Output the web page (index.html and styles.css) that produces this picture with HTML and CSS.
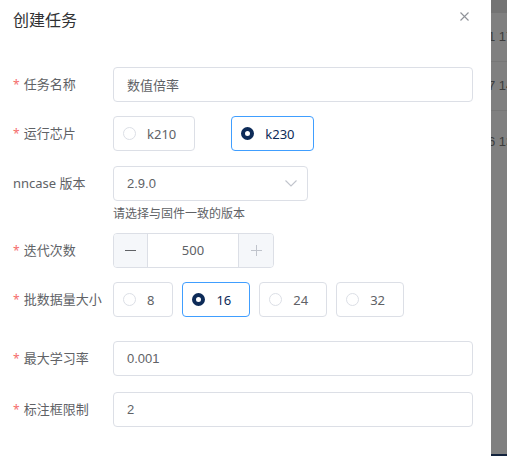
FILE: index.html
```html
<!DOCTYPE html>
<html lang="zh-CN">
<head>
<meta charset="utf-8">
<title>创建任务</title>
<link rel="stylesheet" href="styles.css">
</head>
<body>
<div class="page">
  <div class="dialog">
    <div class="dialog-header">
      <span class="title">创建任务</span>
      <span class="close">
        <svg width="9" height="9" viewBox="0 0 9 9"><path d="M0.5 0.5L8.5 8.5M8.5 0.5L0.5 8.5" stroke="#909399" stroke-width="1.1" fill="none"/></svg>
      </span>
    </div>
    <div class="form">
      <div class="item gap-14">
        <div class="label"><span class="req">*</span>任务名称</div>
        <div class="control"><div class="input">数值倍率</div></div>
      </div>
      <div class="item gap-15">
        <div class="label"><span class="req">*</span>运行芯片</div>
        <div class="control radios radios-wide">
          <div class="radio-box"><span class="dot"></span><span class="rtext">k210</span></div>
          <div class="radio-box checked"><span class="dot"></span><span class="rtext">k230</span></div>
        </div>
      </div>
      <div class="item-wrap gap-10">
        <div class="item">
          <div class="label">nncase 版本</div>
          <div class="control">
            <div class="select">
              <span class="input-value">2.9.0</span>
              <svg class="chev" width="12" height="7" viewBox="0 0 12 7"><path d="M0.5 0.5L6 6L11.5 0.5" stroke="#c0c4cc" stroke-width="1.1" fill="none"/></svg>
            </div>
          </div>
        </div>
        <div class="help">请选择与固件一致的版本</div>
      </div>
      <div class="item gap-14">
        <div class="label"><span class="req">*</span>迭代次数</div>
        <div class="control">
          <div class="number">
            <span class="num-btn minus"><svg width="11" height="11" viewBox="0 0 11 11"><path d="M0 5.5H11" stroke="#606266" stroke-width="1"/></svg></span>
            <span class="num-val">500</span>
            <span class="num-btn plus"><svg width="11" height="11" viewBox="0 0 11 11"><path d="M0 5.5H11M5.5 0V11" stroke="#c0c4cc" stroke-width="1"/></svg></span>
          </div>
        </div>
      </div>
      <div class="item gap-24">
        <div class="label"><span class="req">*</span>批数据量大小</div>
        <div class="control radios radios-tight">
          <div class="radio-box"><span class="dot"></span><span class="rtext">8</span></div>
          <div class="radio-box checked"><span class="dot"></span><span class="rtext">16</span></div>
          <div class="radio-box"><span class="dot"></span><span class="rtext">24</span></div>
          <div class="radio-box"><span class="dot"></span><span class="rtext">32</span></div>
        </div>
      </div>
      <div class="item gap-16">
        <div class="label"><span class="req">*</span>最大学习率</div>
        <div class="control"><div class="input"><span class="input-value">0.001</span></div></div>
      </div>
      <div class="item">
        <div class="label"><span class="req">*</span>标注框限制</div>
        <div class="control"><div class="input"><span class="input-value">2</span></div></div>
      </div>
    </div>
  </div>
  <div class="backdrop">
    <div class="bd-head"></div>
    <div class="bd-row r1">1 17</div>
    <div class="bd-row r2">7 14</div>
    <div class="bd-row r3">6 13</div>
    <div class="bd-fill"></div>
    <div class="bd-bottom"></div>
  </div>
</div>
</body>
</html>
```

FILE: styles.css
```css
* { box-sizing: border-box; }
html, body { margin: 0; padding: 0; }
body {
  font-family: "Noto Sans", "Noto Sans CJK SC", sans-serif;
  font-size: 13px;
  color: #606266;
  background: #fff;
}
.page {
  display: flex;
  width: 507px;
  height: 456px;
  overflow: hidden;
}
.dialog {
  width: 491px;
  flex: none;
  background: #fff;
}
.dialog-header {
  display: flex;
  justify-content: space-between;
  height: 38px;
  padding: 0 22px 0 13px;
}
.title {
  font-family: "Noto Sans CJK SC", sans-serif;
  font-size: 16px;
  line-height: 38px;
  color: #303133;
}
.close {
  margin-top: 12px;
  width: 9px;
  height: 9px;
  display: flex;
}
.form {
  padding: 29px 18px 0 0;
}
.item {
  display: flex;
  align-items: center;
}
.gap-10 { margin-bottom: 10px; }
.gap-14 { margin-bottom: 14px; }
.gap-15 { margin-bottom: 15px; }
.gap-16 { margin-bottom: 16px; }
.gap-24 { margin-bottom: 24px; }
.label {
  width: 113px;
  flex: none;
  padding-left: 13px;
  font-family: "Noto Sans", "Noto Sans CJK SC", sans-serif;
  font-size: 13px;
  line-height: 35px;
  color: #606266;
  white-space: nowrap;
}
.req {
  color: #f56c6c;
  font-size: 12px;
  margin-right: 4px;
}
.control {
  flex: 1;
  min-width: 0;
}
.input, .select {
  height: 35px;
  border: 1px solid #dcdfe6;
  border-radius: 4px;
  padding-left: 13px;
  display: flex;
  align-items: center;
  font-family: "Noto Sans CJK SC", sans-serif;
  font-size: 13px;
  color: #606266;
}
.input-value {
  font-family: "Liberation Sans", Arial, sans-serif;
  font-size: 13px;
  color: #606266;
}
.select {
  width: 195px;
  justify-content: space-between;
  padding-right: 10px;
}
.chev { display: block; }
.help {
  margin-left: 113px;
  margin-top: 2px;
  font-family: "Noto Sans CJK SC", sans-serif;
  font-size: 12px;
  line-height: 20px;
  color: #606266;
}
.radios {
  display: flex;
}
.radios-wide { gap: 36px; }
.radios-tight { gap: 9px; }
.radio-box {
  height: 35px;
  display: flex;
  align-items: center;
  border: 1px solid #dcdfe6;
  border-radius: 4px;
  padding: 0 18px 0 9px;
}
.dot {
  width: 13px;
  height: 13px;
  border: 1px solid #dcdfe6;
  border-radius: 50%;
  margin-right: 11px;
  flex: none;
  background: #fff;
}
.rtext {
  font-size: 13px;
  color: #606266;
}
.radio-box.checked {
  border-color: #409eff;
}
.radio-box.checked .dot {
  border: 4.5px solid #0d2b58;
  background: #fff;
}
.radio-box.checked .rtext {
  color: #0d2b58;
}
.number {
  display: flex;
  width: 161px;
  height: 35px;
  border: 1px solid #dcdfe6;
  border-radius: 4px;
  overflow: hidden;
}
.num-btn {
  display: flex;
  align-items: center;
  justify-content: center;
  background: #f5f7fa;
  flex: none;
}
.num-btn.minus {
  width: 34px;
  border-right: 1px solid #dcdfe6;
}
.num-btn.plus {
  width: 35px;
  border-left: 1px solid #dcdfe6;
}
.num-val {
  flex: 1;
  text-align: center;
  line-height: 33px;
  font-size: 13px;
  color: #606266;
}
.backdrop {
  flex: 1;
  display: flex;
  flex-direction: column;
  background: #808080;
  overflow: hidden;
}
.bd-head {
  height: 13px;
  background: #747474;
  flex: none;
}
.bd-row {
  flex: none;
  font-family: "Liberation Sans", Arial, sans-serif;
  font-size: 13px;
  color: #3c3c3c;
  white-space: nowrap;
  text-indent: -3px;
}
.r1 { height: 49px; line-height: 48px; border-bottom: 1px solid #777; }
.r2 { height: 49px; line-height: 48px; border-bottom: 1px solid #777; }
.r3 { height: 62px; line-height: 62px; }
.bd-fill { flex: 1; }
.bd-bottom {
  height: 2px;
  background: #13233d;
  flex: none;
}
```
